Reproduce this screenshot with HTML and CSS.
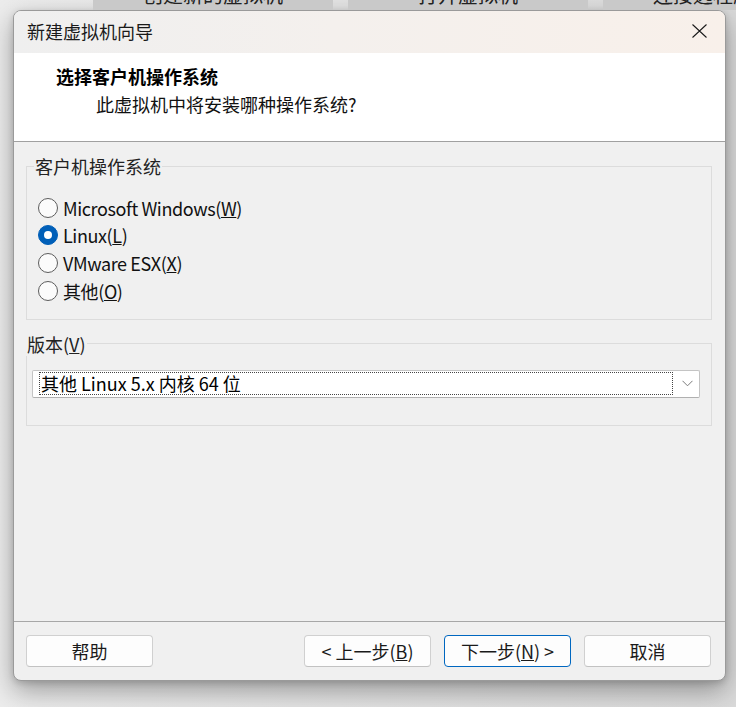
FILE: index.html
```html
<!DOCTYPE html>
<html lang="zh-CN">
<head>
<meta charset="utf-8">
<title>新建虚拟机向导</title>
<link rel="stylesheet" href="styles.css">
</head>
<body>
<div class="tabs">
  <div class="tab"><span>创建新的虚拟机</span></div>
  <div class="tab"><span>打开虚拟机</span></div>
  <div class="tab"><span>连接远程服务器</span></div>
</div>
<div class="dialog">
  <div class="titlebar">
    <span class="title">新建虚拟机向导</span>
    <svg class="close" width="15" height="14" viewBox="0 0 15 14"><path d="M0.5 0.5 L14.5 13.5 M14.5 0.5 L0.5 13.5" stroke="#1b1b1b" stroke-width="1.1" fill="none"/></svg>
  </div>
  <div class="header">
    <div class="h-title">选择客户机操作系统</div>
    <div class="h-sub">此虚拟机中将安装哪种操作系统?</div>
  </div>
  <div class="body">
    <fieldset class="group">
      <legend class="legend-os">客户机操作系统</legend>
      <div class="os-list">
        <div class="radio"><span class="dot"></span>Microsoft Windows(<u>W</u>)</div>
        <div class="radio"><span class="dot on"></span>Linux(<u>L</u>)</div>
        <div class="radio"><span class="dot"></span>VMware ESX(<u>X</u>)</div>
        <div class="radio"><span class="dot"></span>其他(<u>O</u>)</div>
      </div>
    </fieldset>
    <fieldset class="group ver">
      <legend class="legend-ver">版本(<u>V</u>)</legend>
      <div class="ver-inner">
        <div class="combo">
          <div class="combo-val">其他 Linux 5.x 内核 64 位</div>
          <svg class="chev" width="11" height="7" viewBox="0 0 11 7"><path d="M0.5 0.8 L5.5 5.8 L10.5 0.8" stroke="#7a7a7a" stroke-width="1" fill="none"/></svg>
        </div>
      </div>
    </fieldset>
  </div>
  <div class="footer">
    <button class="btn">帮助</button>
    <button class="btn prev">&lt; 上一步(<u>B</u>)</button>
    <button class="btn primary">下一步(<u>N</u>) &gt;</button>
    <button class="btn">取消</button>
  </div>
</div>
</body>
</html>
```
FILE: styles.css
```css
* { box-sizing: border-box; }
html, body { margin: 0; }
body {
  width: 736px;
  height: 707px;
  overflow: hidden;
  background: linear-gradient(to right, #ececec, #e4e4e4 40%, #dadada);
  font-family: "Noto Sans CJK SC", "Noto Sans", sans-serif;
  color: #000;
}
.tabs {
  height: 10px;
  display: flex;
  gap: 15px;
  padding-left: 93px;
  overflow: hidden;
}
.tab {
  flex: none;
  width: 240px;
  height: 10px;
  background: #c9c9c9;
  overflow: hidden;
  text-align: center;
}
.tab span {
  display: block;
  font-size: 20px;
  line-height: 20px;
  margin-top: -15px;
  color: #222;
}
.dialog {
  margin-left: 13px;
  width: 713px;
  height: 671px;
  border: 1px solid #9a9a9a;
  border-radius: 8px;
  overflow: hidden;
  display: flex;
  flex-direction: column;
  background: #f0f0f0;
  box-shadow: 0 10px 26px rgba(0,0,0,0.33), 0 2px 6px rgba(0,0,0,0.15);
}
.titlebar {
  flex: none;
  height: 42px;
  display: flex;
  align-items: center;
  justify-content: space-between;
  padding: 0 18px 3px 13px;
  background: linear-gradient(to right, #efefef, #f4f0ed 45%, #f8f0ea);
  font-size: 18px;
  color: #1a1a1a;
}
.title { line-height: 24px; }
.header {
  flex: none;
  height: 89px;
  background: #fff;
  border-bottom: 1px solid #a0a0a0;
  padding-top: 11px;
}
.h-title {
  padding-left: 42px;
  font-size: 18px;
  line-height: 24px;
  font-weight: 700;
  margin-bottom: 4px;
}
.h-sub {
  padding-left: 82px;
  font-size: 18px;
  line-height: 24px;
  color: #111;
}
.body {
  flex: 1;
  padding: 12px 13px 0 12px;
}
.group {
  margin: 0;
  padding: 0;
  border: 1px solid #dcdcdc;
  min-width: 0;
}
.group legend {
  font-size: 18px;
  line-height: 24px;
  color: #222;
  padding: 0 1px;
}
.legend-os { margin-left: 7px; }
.legend-ver { margin-left: -1px; padding: 0 2px 0 0; }
.os-list {
  padding: 16px 11px 14px 11px;
}
.radio {
  display: flex;
  align-items: center;
  height: 27.67px;
  font-size: 18px;
  letter-spacing: -0.4px;
  color: #111;
}
.dot {
  flex: none;
  width: 20px;
  height: 20px;
  border: 1px solid #5c5c5c;
  border-radius: 50%;
  background: #fbfbfb;
  margin-right: 5px;
  display: flex;
  align-items: center;
  justify-content: center;
}
.dot.on {
  background: #005fb8;
  border-color: #005fb8;
}
.dot.on::after {
  content: "";
  width: 8px;
  height: 8px;
  border-radius: 50%;
  background: #fff;
}
.ver { margin-top: 12px; }
.ver-inner {
  padding: 14px 11px 27px 5px;
}
.combo {
  height: 28px;
  border: 1px solid #c4c4c4;
  border-bottom-color: #b0b0b0;
  border-radius: 2px;
  background: #fff;
  display: flex;
  align-items: center;
  padding: 0 0 0 6px;
}
.combo-val {
  flex: none;
  width: 634px;
  height: 23px;
  border: 1px dotted #444;
  padding-left: 1px;
  font-size: 18px;
  line-height: 21px;
  color: #000;
  white-space: nowrap;
}
.chev { margin-left: auto; margin-right: 6px; }
.footer {
  flex: none;
  height: 59px;
  border-top: 1px solid #a7a7a7;
  padding: 13px 14px 13px 12px;
  display: flex;
  gap: 13px;
}
.btn {
  flex: none;
  width: 127px;
  height: 32px;
  border: 1px solid #d0d0d0;
  border-bottom-color: #c2c2c2;
  border-radius: 4px;
  background: #fdfdfd;
  font-family: inherit;
  font-size: 18px;
  line-height: 24px;
  color: #1a1a1a;
  padding: 0;
}
.btn.prev { margin-left: auto; }
.btn.primary { border-color: #0067c0; }
```
